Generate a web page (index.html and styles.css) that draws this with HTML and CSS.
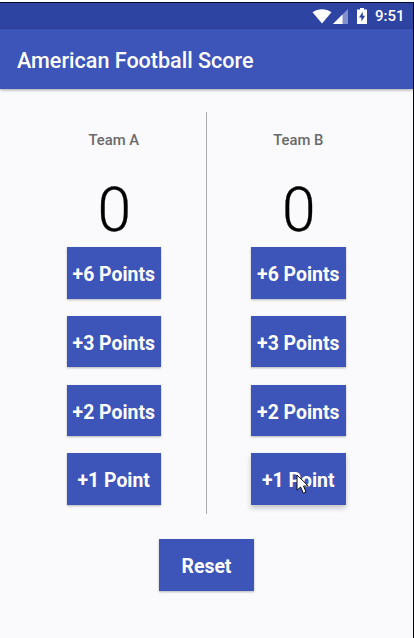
FILE: index.html
```
<!DOCTYPE html>
<html lang="en">
<head>
<meta charset="utf-8">
<title>American Football Score</title>
<link rel="stylesheet" href="styles.css">
</head>
<body>
<div class="screen">
  <div class="status">
    <svg class="wifi" width="20" height="15" viewBox="0 0 20 15"><path d="M0.5 3.2C6 -0.7 14 -0.7 19.5 3.2L10 14.6Z" fill="#fff"/></svg>
    <svg class="signal" width="15" height="15" viewBox="0 0 15 15"><path d="M0 15L15 0V15Z" fill="#8290cb"/><path d="M0 15L9.5 5.5V15Z" fill="#fff"/></svg>
    <svg class="battery" width="10" height="16" viewBox="0 0 10 16"><path d="M3 0H7V1.6H10V16H0V1.6H3Z" fill="#fff"/><path d="M5.8 3.8L2 9.6H4.4V13.4L8.1 7.8H5.8Z" fill="#2c429f"/></svg>
    <span class="time">9:51</span>
  </div>
  <header class="appbar"><h1>American Football Score</h1></header>
  <main>
    <div class="teams">
      <section class="team">
        <h2>Team A</h2>
        <div class="score">0</div>
        <button>+6 Points</button>
        <button>+3 Points</button>
        <button>+2 Points</button>
        <button>+1 Point</button>
      </section>
      <div class="divider"></div>
      <section class="team">
        <h2>Team B</h2>
        <div class="score">0</div>
        <button>+6 Points</button>
        <button>+3 Points</button>
        <button>+2 Points</button>
        <button class="raised">+1 Point
          <svg class="cursor" width="14" height="21" viewBox="0 0 14 21"><path d="M1 1V16.2L4.6 13L7.3 19.2L10.1 18L7.5 12H12.2Z" fill="#fff" stroke="#111" stroke-width="1"/></svg>
        </button>
      </section>
    </div>
    <button class="reset">Reset</button>
  </main>
</div>
</body>
</html>
```
FILE: styles.css
```
* { box-sizing: border-box; }
body {
  margin: 0;
  height: 638px;
  padding-top: 2px;
  background: #fff;
  font-family: Roboto, sans-serif;
  overflow: hidden;
}
.screen {
  width: 414px;
  height: 636px;
  border-top: 1px solid #050528;
  border-right: 1px solid #000;
  background: #fafafc;
}
.status {
  height: 26px;
  display: flex;
  align-items: center;
  justify-content: flex-end;
  padding-right: 9px;
  background: #2d44a2;
  color: #fff;
}
.wifi { margin-right: 1px; }
.signal { margin-right: 9px; }
.battery { margin-right: 8px; }
.time {
  width: 29px;
  font-size: 15px;
  font-weight: 500;
  line-height: 28px;
  white-space: nowrap;
}
.appbar {
  height: 60px;
  padding-left: 17px;
  background: #3d54b8;
  box-shadow: 0 1px 3px rgba(0, 0, 0, 0.35);
}
h1 {
  margin: 0;
  color: #fff;
  font-size: 21.55px;
  font-weight: 500;
  line-height: 63px;
}
main {
  padding-top: 23px;
  display: flex;
  flex-direction: column;
  align-items: center;
}
.teams {
  width: 100%;
  height: 402px;
  display: flex;
  padding: 0 22px;
}
.team {
  flex: 1;
  display: flex;
  flex-direction: column;
  align-items: center;
}
.divider { width: 1px; background: #a9a9a9; }
h2 {
  margin: 18px 0 0;
  color: #696969;
  font-size: 14.8px;
  font-weight: 500;
  line-height: 20px;
}
.score {
  height: 97px;
  padding-left: 1px;
  color: #000;
  font-size: 60.5px;
  font-weight: 300;
  line-height: 121px;
  -webkit-text-stroke: 0.3px #000;
}
button {
  position: relative;
  flex: none;
  width: 95px;
  height: 51.6px;
  margin: 0 0 17.2px;
  padding: 0;
  border: 0;
  background: #3d54b8;
  color: #fff;
  font-family: inherit;
  font-size: 19.4px;
  font-weight: 700;
  line-height: 55px;
  white-space: nowrap;
  box-shadow: 0 1px 2px rgba(0, 0, 0, 0.28);
}
.team button { width: 94.4px; }
.team:last-child { padding-right: 1px; }
.team:last-child button { width: 95px; }
.team button.raised { box-shadow: 0 3px 5px rgba(0, 0, 0, 0.22); }
.cursor { position: absolute; left: 45px; top: 21px; }
.reset { margin: 25.4px 0 0; }
```
